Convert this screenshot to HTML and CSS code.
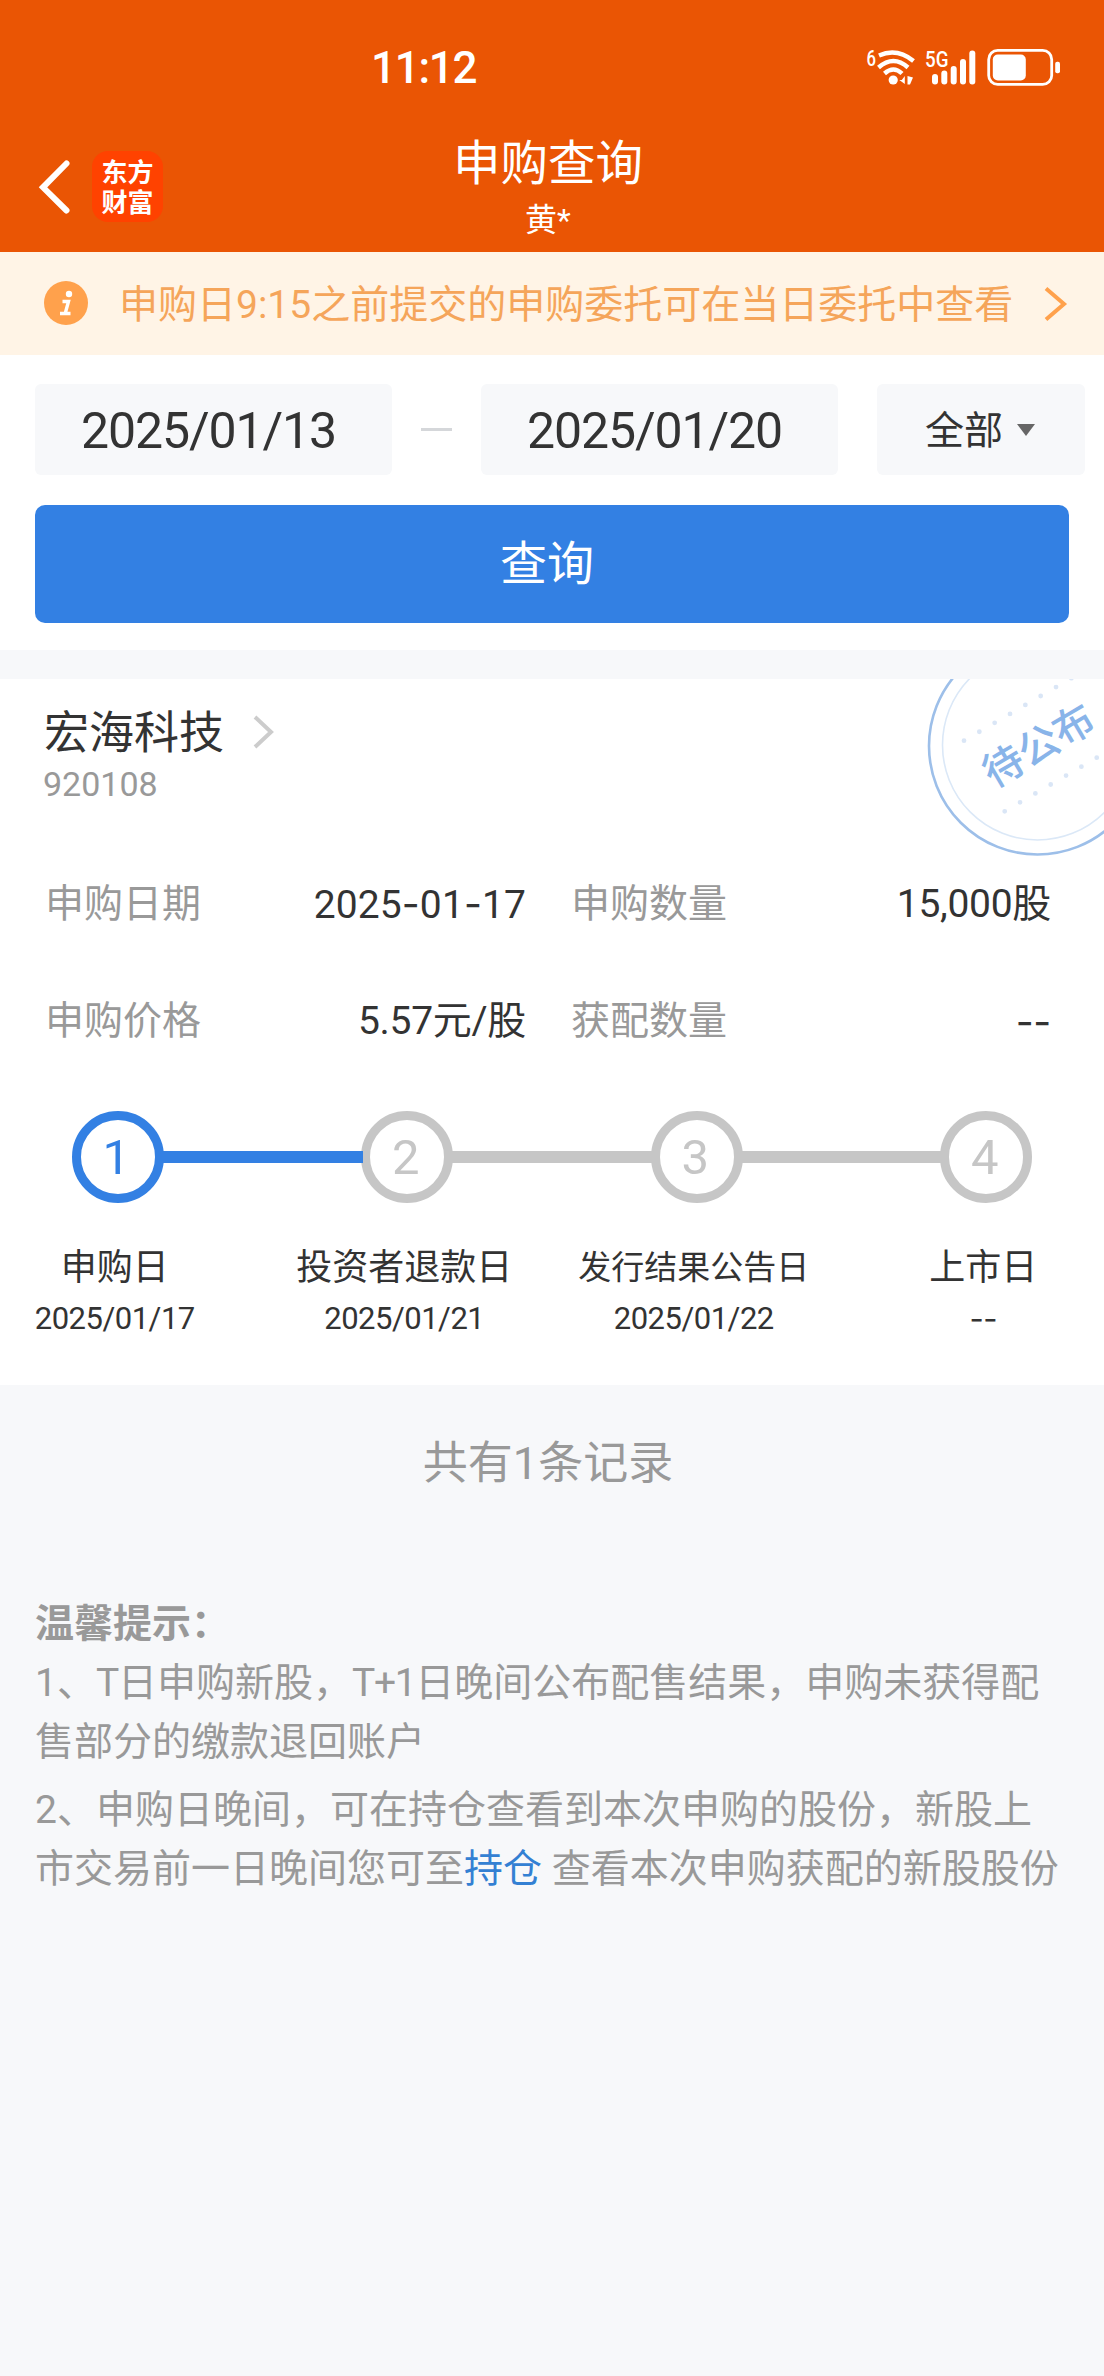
FILE: index.html
```html
<!DOCTYPE html>
<html lang="zh-CN">
<head>
<meta charset="utf-8">
<title>申购查询</title>
<link rel="stylesheet" href="styles.css">
</head>
<body>
<header class="top">
  <div class="status">
    <span class="clock">11:12</span>
    <svg class="status-icons" width="200" height="44" viewBox="864 46 200 44" fill="#fff">
      <text class="tag" x="866.500" y="65.500" textLength="9.500" lengthAdjust="spacingAndGlyphs">6</text>
      <g fill="none" stroke="#fff" stroke-width="4.4">
        <path d="M879 55.500Q897 47.500 913.500 61"/>
        <path d="M878.500 67.500Q893.500 54.500 908 67.500"/>
        <path d="M884.500 73.500Q893.500 65.500 902 73.500"/>
      </g>
      <circle cx="893.200" cy="80" r="4.600"/>
      <path d="M904.800 76v8l-5.500-4h2.500zM907.500 76l5.500 1.500-3 7h-2.500z"/>
      <text class="tag" x="925" y="66.500" textLength="23.500" lengthAdjust="spacingAndGlyphs">5G</text>
      <rect x="932" y="74" width="6" height="10.500" rx="3"/>
      <rect x="941.300" y="70.500" width="6" height="14" rx="3"/>
      <rect x="950.700" y="66" width="6" height="18.500" rx="3"/>
      <rect x="960" y="59" width="6" height="25.500" rx="3"/>
      <rect x="969.300" y="50.500" width="6" height="34" rx="3"/>
      <rect x="988.700" y="50.400" width="63" height="34" rx="9" fill="none" stroke="#fff" stroke-width="2.800"/>
      <rect x="992.800" y="54.500" width="33" height="26" rx="5"/>
      <rect x="1055.200" y="61.800" width="4.800" height="11.500" rx="2"/>
    </svg>
  </div>
  <div class="nav">
    <div class="nav-left">
      <svg width="32" height="56" viewBox="38 159 32 56" fill="none" stroke="#fff" stroke-width="6" stroke-linecap="round"><path d="M66.500 163.500L43 187.300L66.500 210.500"/></svg>
      <div class="logo"><span>东方<br>财富</span></div>
    </div>
    <div class="nav-title">
      <h1>申购查询</h1>
      <p>黄*</p>
    </div>
  </div>
</header>

<section class="notice">
  <svg width="44" height="44" viewBox="44 281 44 44">
    <circle cx="66" cy="303" r="22" fill="#ffa14c"/>
    <circle cx="69" cy="294" r="3.200" fill="#fff"/>
    <path d="M62.500 301.500h6l-3.300 12M60 313.500h10.500" fill="none" stroke="#fff" stroke-width="3.400"/>
  </svg>
  <p>申购日9:15之前提交的申购委托可在当日委托中查看</p>
  <svg width="26" height="38" viewBox="1042 286 26 38" fill="none" stroke="#ffa14c" stroke-width="4"><path d="M1046 290.500L1064 306L1046 321.500"/></svg>
</section>

<section class="filter">
  <div class="fields">
    <div class="date">2025/01/13</div>
    <i class="sep"></i>
    <div class="date">2025/01/20</div>
    <div class="kind">全部<i class="caret"></i></div>
  </div>
  <div class="submit">查询</div>
</section>

<section class="card">
  <svg class="stamp" width="180" height="180" viewBox="924 679 180 180">
    <circle cx="1037.500" cy="746" r="108.500" fill="none" stroke="#9dbfe9" stroke-width="2.600"/>
    <circle cx="1037.500" cy="745" r="95" fill="none" stroke="#dbe8f7" stroke-width="1.600"/>
    <g stroke="#dae6f6" stroke-width="4.800" stroke-linecap="round" stroke-dasharray="0 17.750">
      <path d="M964 740.700L1102.500 660"/>
      <path d="M1004.700 811.300L1128 739.500"/>
    </g>
    <text x="1038.500" y="760" transform="rotate(-30.500 1038.500 745.500)" text-anchor="middle">待公布</text>
  </svg>
  <div class="name">
    <h2>宏海科技</h2>
    <svg width="24" height="36" viewBox="252 714 24 36" fill="none" stroke="#ccc" stroke-width="4"><path d="M255 717L271 732L255 747"/></svg>
  </div>
  <p class="code">920108</p>
  <dl class="facts">
    <div><dt>申购日期</dt><dd class="day">2025<span class="dash">-</span>01<span class="dash">-</span>17</dd></div>
    <div><dt>申购数量</dt><dd>15,000股</dd></div>
    <div><dt>申购价格</dt><dd>5.57元/股</dd></div>
    <div><dt>获配数量</dt><dd><span class="dash">--</span></dd></div>
  </dl>
  <ol class="steps">
    <li class="done"><b>1</b><em>申购日</em><small>2025/01/17</small></li>
    <li><b>2</b><em>投资者退款日</em><small>2025/01/21</small></li>
    <li><b>3</b><em class="long">发行结果公告日</em><small>2025/01/22</small></li>
    <li><b>4</b><em>上市日</em><small><span class="dash">--</span></small></li>
  </ol>
</section>

<p class="total">共有1条记录</p>

<section class="tips">
  <h3>温馨提示：</h3>
  <p>1、<span class="term">T</span>日申购新股，<span class="term">T+1</span>日晚间公布配售结果，申购未获得配<br>售部分的缴款退回账户</p>
  <p>2、申购日晚间，可在持仓查看到本次申购的股份，新股上<br>市交易前一日晚间您可至<a>持仓</a> 查看本次申购获配的新股股份</p>
</section>
</body>
</html>
```
FILE: styles.css
```css
* { box-sizing: border-box; margin: 0; padding: 0; }
body {
  width: 1104px;
  height: 2376px;
  overflow: hidden;
  background: #f7f8fa;
  color: #333;
  font-family: Roboto, "Noto Sans CJK SC", sans-serif;
  font-size: 39px;
}
h1, h2, h3, em, small, b { font-weight: 400; font-style: normal; }
svg { display: block; flex: none; }

.top { height: 252px; background: #ea5504; color: #fff; }
.status { display: flex; justify-content: space-between; height: 110px; padding: 46px 40px 0 371px; }
.clock { font-size: 44px; font-weight: 500; line-height: 44px; letter-spacing: -1.3px; }
.tag { font: 500 22px Roboto, sans-serif; }
.nav { display: grid; grid-template-columns: 1fr 190px 1fr; height: 142px; padding-right: 8px; }
.nav-left { display: flex; gap: 22px; padding: 41px 0 0 38px; align-items: flex-start; }
.nav-left > svg { margin-top: 8px; }
.logo {
  display: flex; justify-content: center; align-items: center;
  width: 71px; height: 71px; border-radius: 16px; background: #ff4200;
  font: 700 26px/30px "Noto Sans CJK SC", sans-serif;
}
.logo span { padding-bottom: 1px; }
.nav-title { text-align: center; white-space: nowrap; }
h1 { padding-top: 24px; font-size: 47.500px; line-height: 60px; }
.nav-title p { font-size: 32px; line-height: 52px; }

.notice {
  display: flex; align-items: center; height: 103px; padding: 0 36px 2px 44px;
  background: #fff4e6; color: #f5a55a;
}
.notice p { flex: 1; margin-left: 31px; padding-top: 4px; line-height: 60px; white-space: nowrap; }

.filter { height: 295px; padding: 29px 19px 0 35px; background: #fff; }
.fields { display: flex; align-items: center; height: 91px; }
.date, .kind { height: 91px; border-radius: 6px; background: #f7f8fa; line-height: 95px; }
.date { width: 357px; padding-left: 46px; font-size: 50px; letter-spacing: -1.1px; }
.sep { width: 31px; height: 3px; margin: 0 29px; background: #d5d7da; }
.kind { display: flex; align-items: center; width: 208px; margin-left: 39px; padding-left: 48px; line-height: 91px; padding-top: 3px; }
.caret { margin: -3px 0 0 14px; border: solid transparent; border-width: 12px 9px 0; border-top-color: #666; }
.submit {
  width: 1034px; height: 118px; margin-top: 30px; border-radius: 10px; background: #3380e3;
  color: #fff; font-size: 47px; line-height: 118px; text-align: center; text-indent: -10px;
}

.card { position: relative; height: 706px; margin-top: 29px; padding: 22px 35px 0; background: #fff; overflow: hidden; }
.stamp { position: absolute; top: 0; right: 0; }
.stamp text { font: 500 40.500px "Noto Sans CJK SC", sans-serif; fill: #89b4e9; }
.name { display: flex; align-items: center; gap: 28px; height: 60px; padding-left: 9px; }
h2 { padding-top: 5px; font-size: 45px; line-height: 60px; }
.name svg { margin-top: 2px; }
.code { padding-left: 8px; color: #999; font-size: 34px; line-height: 46px; }
.dash { font-family: Inter, sans-serif; }
.facts { display: grid; grid-template-columns: 481px 480px; column-gap: 45px; padding: 39px 0 0 10px; }
.facts div { display: flex; justify-content: space-between; height: 117px; line-height: 117px; }
.facts dt { color: #999; }
.facts dd { letter-spacing: -0.3px; }
.facts .day { letter-spacing: 0.1px; line-height: 115px; }
.steps { display: flex; width: 1158px; margin: 31px 0 0 -62px; list-style: none; }
.steps li { position: relative; display: flex; flex-direction: column; align-items: center; width: 289.500px; }
.steps li + li::before {
  content: ""; position: absolute; top: 40px; left: -101px; width: 201px; height: 12px; background: #c6c6c6;
}
.steps .done + li::before { background: #3380e3; }
.steps b {
  width: 92px; height: 92px; padding-right: 3px; border: 9px solid #c6c6c6; border-radius: 50%;
  color: #c6c6c6; font-size: 49px; line-height: 76px; text-align: center;
}
.steps .done b { border-color: #3380e3; color: #3380e3; }
.steps em { margin: 43px 6px 0 0; font-size: 36px; line-height: 44px; white-space: nowrap; }
.steps .long { font-size: 33px; }
.steps small { margin: 7px 6px 0 0; font-size: 31px; line-height: 44px; letter-spacing: -0.5px; }

.total { padding-right: 8px; padding-top: 49px; color: #999; font-size: 45px; line-height: 60px; text-align: center; }
.tips { padding: 101px 0 0 35px; color: #999; line-height: 59px; white-space: nowrap; }
h3 { font-size: 39px; font-weight: 700; }
.tips p + p { margin-top: 9px; }
.tips a { color: #3380d3; }
.term { letter-spacing: -1.3px; }
```
